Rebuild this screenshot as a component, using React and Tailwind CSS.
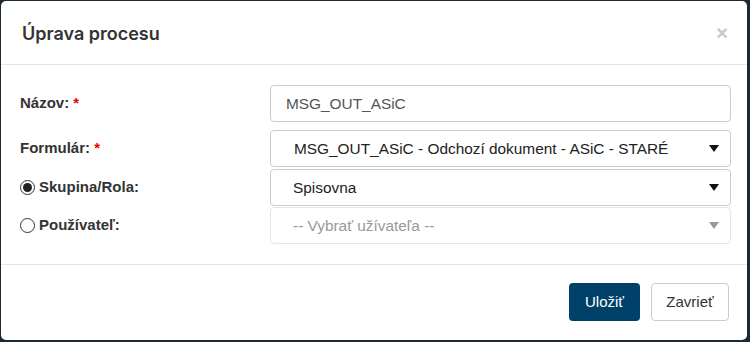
import React from "react";

const Caret = ({ muted }) => (
  <svg width="10" height="7" viewBox="0 0 10 7" className="shrink-0">
    <path d="M0 0 L10 0 L5 7 Z" fill={muted ? "#999" : "#111"} />
  </svg>
);

const Radio = ({ checked }) => (
  <span className="w-[15px] h-[15px] rounded-full border border-[#333] bg-white flex items-center justify-center mr-[4px] shrink-0">
    {checked && <span className="w-[9px] h-[9px] rounded-full bg-[#222]"></span>}
  </span>
);

export default function App() {
  return (
    <div
      className="w-[750px] h-[342px] bg-[#1d2a33] pt-[1px] pl-[1px] pr-[3px] pb-[2px]"
      style={{ fontFamily: '"Liberation Sans", Arial, sans-serif' }}
    >
      <div className="h-full bg-white rounded-[5px] flex flex-col">
        {/* header */}
        <div className="h-[64px] border-b border-[#e5e5e5] flex items-center justify-between pl-[21px] pr-[19px] shrink-0">
          <h1
            className="text-[18px] font-semibold text-[#333] pt-[1px]"
            style={{ fontFamily: "Inter, sans-serif" }}
          >
            Úprava procesu
          </h1>
          <span className="text-[#c8c8c8] text-[20px] font-bold leading-none">×</span>
        </div>

        {/* body */}
        <div className="flex-1 pt-[20px] pl-[19px] pr-[16px] flex flex-col">
          <div className="flex items-center">
            <label className="w-[250px] text-[15px] font-bold text-[#333]">
              Názov: <span className="text-[#e00]">*</span>
            </label>
            <div className="flex-1 h-[37px] border border-[#ccc] rounded-[4px] flex items-center px-[15px] text-[15.4px] text-[#555]">
              MSG_OUT_ASiC
            </div>
          </div>

          <div className="flex items-center mt-[8px]">
            <label className="w-[250px] text-[15px] font-bold text-[#333]">
              Formulár: <span className="text-[#e00]">*</span>
            </label>
            <div className="flex-1 h-[37px] border border-[#ccc] rounded-[4px] flex items-center justify-between pl-[23px] pr-[11px] text-[15.4px] text-[#222]">
              <span>MSG_OUT_ASiC - Odchozí dokument - ASiC - STARÉ</span>
              <Caret />
            </div>
          </div>

          <div className="flex items-center mt-[2px]">
            <label className="w-[250px] text-[15px] font-bold text-[#333] flex items-center">
              <Radio checked />
              Skupina/Rola:
            </label>
            <div className="flex-1 h-[37px] border border-[#ccc] rounded-[4px] flex items-center justify-between pl-[22px] pr-[11px] text-[15.4px] text-[#222]">
              <span>Spisovna</span>
              <Caret />
            </div>
          </div>

          <div className="flex items-start mt-[1px]">
            <label className="w-[250px] text-[15px] font-bold text-[#333] flex items-center pt-[7px]">
              <Radio />
              Používateľ:
            </label>
            <div className="flex-1 h-[37px] border border-[#e6e6e6] rounded-[4px] flex items-center justify-between pl-[22px] pr-[11px] text-[15.4px] text-[#999]">
              <span>-- Vybrať užívateľa --</span>
              <Caret muted />
            </div>
          </div>
        </div>

        {/* footer */}
        <div className="h-[76px] border-t border-[#e5e5e5] flex items-center justify-end gap-[11px] pr-[18px] shrink-0 pb-[1px]">
          <button className="h-[38px] w-[71px] bg-[#00416a] text-white text-[15px] rounded-[4px]">
            Uložiť
          </button>
          <button className="h-[38px] w-[78px] bg-white border border-[#ccc] text-[#333] text-[15px] rounded-[4px]">
            Zavrieť
          </button>
        </div>
      </div>
    </div>
  );
}
